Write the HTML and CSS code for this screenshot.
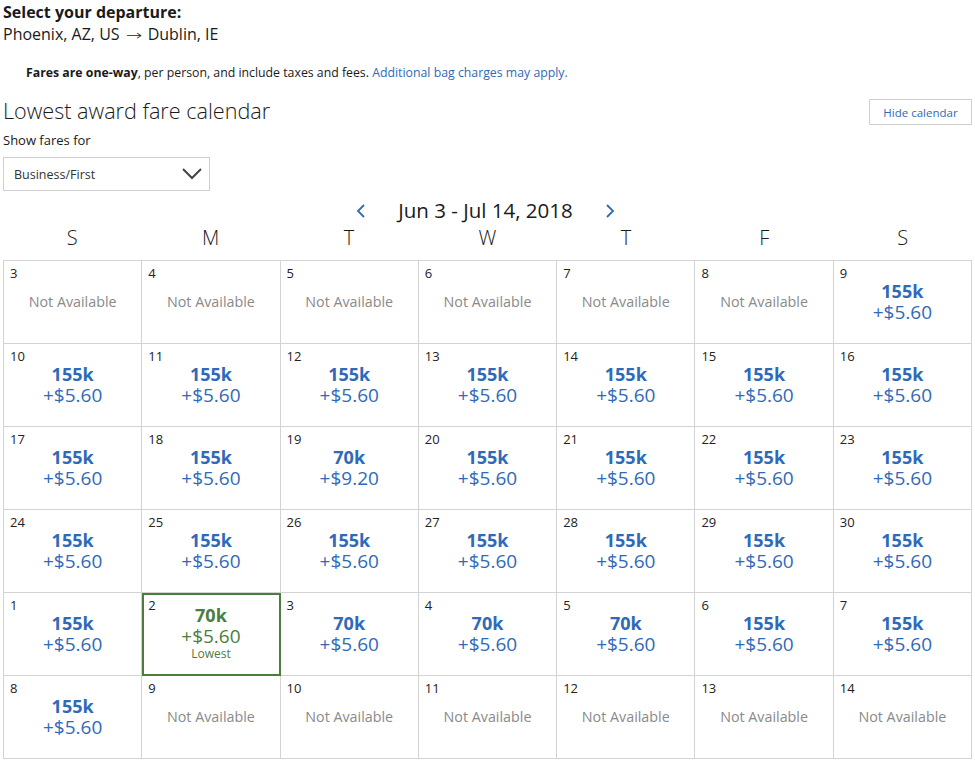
FILE: index.html
```html
<!DOCTYPE html>
<html lang="en">
<head>
	<meta charset="UTF-8">
	<title>Select your departure</title>
	<link rel="stylesheet" href="styles.css">
</head>
<body>
	<div class="page">
		<h1 class="dep_title">Select your departure:</h1>
		<div class="dep_route">Phoenix, AZ, US <span class="route_arrow">&rarr;</span> Dublin, IE</div>

		<p class="fare_note"><b>Fares are one-way</b>, per person, and include taxes and fees. <a href="javascript:;">Additional bag charges may apply.</a></p>

		<div class="cal_top">
			<h2 class="cal_title">Lowest award fare calendar</h2>
			<a class="hide_btn" href="javascript:;">Hide calendar</a>
		</div>
		<div class="show_label">Show fares for</div>
		<div class="select_box">
			<span>Business/First</span>
			<svg width="20" height="12" viewBox="0 0 20 12"><path d="M1 1 L10 10 L19 1" fill="none" stroke="#444" stroke-width="2"/></svg>
		</div>

		<div class="range">
			<a class="arrow" href="javascript:;"><svg width="10" height="16" viewBox="0 0 10 16"><path d="M8 2 L2 8 L8 14" fill="none" stroke="#2f6ab9" stroke-width="1.8"/></svg></a>
			<span>Jun 3 - Jul 14, 2018</span>
			<a class="arrow" href="javascript:;"><svg width="10" height="16" viewBox="0 0 10 16"><path d="M2 2 L8 8 L2 14" fill="none" stroke="#2f6ab9" stroke-width="1.8"/></svg></a>
		</div>

		<div class="weekdays">
			<div>S</div><div>M</div><div>T</div><div>W</div><div>T</div><div>F</div><div>S</div>
		</div>

		<div class="cal">
			<div class="day"><div class="num">3</div><div class="na">Not Available</div></div>
			<div class="day"><div class="num">4</div><div class="na">Not Available</div></div>
			<div class="day"><div class="num">5</div><div class="na">Not Available</div></div>
			<div class="day"><div class="num">6</div><div class="na">Not Available</div></div>
			<div class="day"><div class="num">7</div><div class="na">Not Available</div></div>
			<div class="day"><div class="num">8</div><div class="na">Not Available</div></div>
			<div class="day"><div class="num">9</div><div class="miles">155k</div><div class="tax">+$5.60</div></div>

			<div class="day"><div class="num">10</div><div class="miles">155k</div><div class="tax">+$5.60</div></div>
			<div class="day"><div class="num">11</div><div class="miles">155k</div><div class="tax">+$5.60</div></div>
			<div class="day"><div class="num">12</div><div class="miles">155k</div><div class="tax">+$5.60</div></div>
			<div class="day"><div class="num">13</div><div class="miles">155k</div><div class="tax">+$5.60</div></div>
			<div class="day"><div class="num">14</div><div class="miles">155k</div><div class="tax">+$5.60</div></div>
			<div class="day"><div class="num">15</div><div class="miles">155k</div><div class="tax">+$5.60</div></div>
			<div class="day"><div class="num">16</div><div class="miles">155k</div><div class="tax">+$5.60</div></div>

			<div class="day"><div class="num">17</div><div class="miles">155k</div><div class="tax">+$5.60</div></div>
			<div class="day"><div class="num">18</div><div class="miles">155k</div><div class="tax">+$5.60</div></div>
			<div class="day"><div class="num">19</div><div class="miles">70k</div><div class="tax">+$9.20</div></div>
			<div class="day"><div class="num">20</div><div class="miles">155k</div><div class="tax">+$5.60</div></div>
			<div class="day"><div class="num">21</div><div class="miles">155k</div><div class="tax">+$5.60</div></div>
			<div class="day"><div class="num">22</div><div class="miles">155k</div><div class="tax">+$5.60</div></div>
			<div class="day"><div class="num">23</div><div class="miles">155k</div><div class="tax">+$5.60</div></div>

			<div class="day"><div class="num">24</div><div class="miles">155k</div><div class="tax">+$5.60</div></div>
			<div class="day"><div class="num">25</div><div class="miles">155k</div><div class="tax">+$5.60</div></div>
			<div class="day"><div class="num">26</div><div class="miles">155k</div><div class="tax">+$5.60</div></div>
			<div class="day"><div class="num">27</div><div class="miles">155k</div><div class="tax">+$5.60</div></div>
			<div class="day"><div class="num">28</div><div class="miles">155k</div><div class="tax">+$5.60</div></div>
			<div class="day"><div class="num">29</div><div class="miles">155k</div><div class="tax">+$5.60</div></div>
			<div class="day"><div class="num">30</div><div class="miles">155k</div><div class="tax">+$5.60</div></div>

			<div class="day"><div class="num">1</div><div class="miles">155k</div><div class="tax">+$5.60</div></div>
			<div class="day lowest"><div class="num">2</div><div class="miles">70k</div><div class="tax">+$5.60</div><div class="low_tag">Lowest</div></div>
			<div class="day"><div class="num">3</div><div class="miles">70k</div><div class="tax">+$5.60</div></div>
			<div class="day"><div class="num">4</div><div class="miles">70k</div><div class="tax">+$5.60</div></div>
			<div class="day"><div class="num">5</div><div class="miles">70k</div><div class="tax">+$5.60</div></div>
			<div class="day"><div class="num">6</div><div class="miles">155k</div><div class="tax">+$5.60</div></div>
			<div class="day"><div class="num">7</div><div class="miles">155k</div><div class="tax">+$5.60</div></div>

			<div class="day"><div class="num">8</div><div class="miles">155k</div><div class="tax">+$5.60</div></div>
			<div class="day"><div class="num">9</div><div class="na">Not Available</div></div>
			<div class="day"><div class="num">10</div><div class="na">Not Available</div></div>
			<div class="day"><div class="num">11</div><div class="na">Not Available</div></div>
			<div class="day"><div class="num">12</div><div class="na">Not Available</div></div>
			<div class="day"><div class="num">13</div><div class="na">Not Available</div></div>
			<div class="day"><div class="num">14</div><div class="na">Not Available</div></div>
		</div>
	</div>
</body>
</html>
```

FILE: styles.css
```css
*{
	margin: 0;
	padding: 0;
	box-sizing: border-box;
}
body{
	font-family: "Open Sans", "Liberation Sans", sans-serif;
	color: #1a1a1a;
	background-color: #fff;
}
a{
	color: #2f6ab9;
	text-decoration: none;
}
.page{
	width: 975px;
	padding: 1px 3px 0 3px;
}
.dep_title{
	font-size: 16px;
	font-weight: 700;
	line-height: 22px;
}
.dep_route{
	font-size: 16px;
	line-height: 22px;
	height: 22px;
}
.route_arrow{
	font-family: "DejaVu Sans", sans-serif;
	font-size: 14px;
	font-weight: 200;
	line-height: 0;
	display: inline-block;
	transform: scaleX(1.4);
	margin: 0 4px;
}
.fare_note{
	font-size: 12.3px;
	line-height: 18px;
	margin-top: 19px;
	padding-left: 23px;
}
.cal_top{
	display: flex;
	justify-content: space-between;
	align-items: flex-start;
	margin-top: 14px;
}
.cal_title{
	font-size: 21.6px;
	font-weight: 300;
	line-height: 30px;
}
.hide_btn{
	margin-top: 3px;
	width: 103px;
	height: 26px;
	border: 1px solid #cfcfcf;
	font-size: 11.5px;
	display: flex;
	align-items: center;
	justify-content: center;
}
.show_label{
	font-size: 13px;
	line-height: 18px;
	margin-top: 5px;
}
.select_box{
	margin-top: 8px;
	width: 207px;
	height: 34px;
	border: 1px solid #cfcfcf;
	display: flex;
	align-items: center;
	justify-content: space-between;
	padding: 0 7px 0 10px;
	font-size: 12.5px;
	color: #333;
}
.range{
	margin-top: 6px;
	display: flex;
	justify-content: center;
	align-items: center;
	gap: 32px;
	font-size: 20.5px;
	line-height: 26px;
	height: 26px;
	padding-right: 4px;
}
.arrow{
	display: flex;
	align-items: center;
	padding-top: 2px;
}
.weekdays{
	margin-top: 2px;
	display: grid;
	grid-template-columns: repeat(7, 1fr);
	width: 969px;
	font-size: 20px;
	font-weight: 300;
	line-height: 26px;
	text-align: center;
}
.cal{
	margin-top: 9px;
	display: grid;
	grid-template-columns: repeat(7, 1fr);
	grid-auto-rows: 83px;
	width: 969px;
	border-top: 1px solid #d3d3d3;
	border-left: 1px solid #d3d3d3;
}
.day{
	border-right: 1px solid #d3d3d3;
	border-bottom: 1px solid #d3d3d3;
	padding-top: 3px;
	text-align: center;
	position: relative;
}
.num{
	text-align: left;
	padding-left: 6px;
	font-size: 13px;
	line-height: 18px;
	color: #222;
}
.na{
	margin-top: 11px;
	font-size: 14.3px;
	line-height: 18px;
	color: #8a8a8a;
}
.miles{
	font-size: 18px;
	font-weight: 700;
	line-height: 20px;
	margin-top: -1px;
	color: #2f6ab9;
}
.tax{
	font-size: 19px;
	line-height: 22px;
	color: #2f6ab9;
}
.lowest{
	outline: 2px solid #4b7d3c;
	outline-offset: -2px;
	z-index: 1;
}
.lowest .miles{
	margin-top: -9px;
	color: #4b7d3c;
}
.lowest .tax{
	color: #4b7d3c;
}
.low_tag{
	font-size: 12px;
	line-height: 14px;
	color: #4b7d3c;
}
```
